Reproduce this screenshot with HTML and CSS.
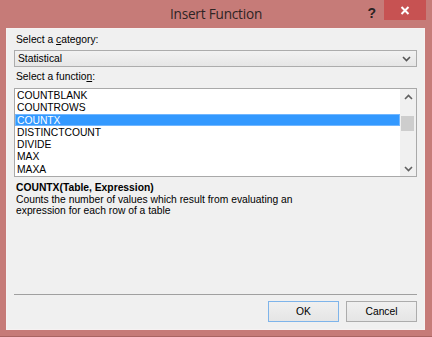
FILE: index.html
```html
<!DOCTYPE html>
<html>
<head>
<meta charset="utf-8">
<link rel="stylesheet" href="styles.css">
</head>
<body>
<div class="window">
  <div class="titlebar">
    <div class="tb-left"></div>
    <div class="title">Insert Function</div>
    <div class="tb-right">
      <span class="help">?</span>
      <span class="close"><svg width="10" height="9" viewBox="0 0 10 9"><path d="M1.5 1 L8.5 8 M8.5 1 L1.5 8" stroke="#fff" stroke-width="2" fill="none"/></svg></span>
    </div>
  </div>
  <div class="client">
    <div class="label">Select a <u>c</u>ategory:</div>
    <div class="combo">
      <span>Statistical</span>
      <svg class="chev" width="9" height="6" viewBox="0 0 9 6"><path d="M1 1 L4.5 4.5 L8 1" stroke="#555" stroke-width="1.6" fill="none"/></svg>
    </div>
    <div class="label label2">Select a functio<u>n</u>:</div>
    <div class="list">
      <div class="items">
        <div class="item">COUNTBLANK</div>
        <div class="item">COUNTROWS</div>
        <div class="item sel">COUNTX</div>
        <div class="item">DISTINCTCOUNT</div>
        <div class="item">DIVIDE</div>
        <div class="item">MAX</div>
        <div class="item">MAXA</div>
      </div>
      <div class="scroll">
        <svg class="arrow" width="9" height="6" viewBox="0 0 9 6"><path d="M1 5 L4.5 1.5 L8 5" stroke="#606060" stroke-width="1.6" fill="none"/></svg>
        <div class="track"><div class="thumb"></div></div>
        <svg class="arrow" width="9" height="6" viewBox="0 0 9 6"><path d="M1 1 L4.5 4.5 L8 1" stroke="#606060" stroke-width="1.6" fill="none"/></svg>
      </div>
    </div>
    <div class="desc">
      <div class="sig">COUNTX(Table, Expression)</div>
      <div class="text">Counts the number of values which result from evaluating an expression for each row of a table</div>
    </div>
    <div class="sep"></div>
    <div class="buttons">
      <div class="btn ok">OK</div>
      <div class="btn">Cancel</div>
    </div>
  </div>
</div>
</body>
</html>
```
FILE: styles.css
```css
html, body {
  margin: 0;
  padding: 0;
}
body {
  width: 432px;
  height: 337px;
  overflow: hidden;
  font-family: "Liberation Sans", Arial, sans-serif;
}
.window {
  width: 432px;
  height: 337px;
  box-sizing: border-box;
  background: #c67b78;
  border-bottom: 1px solid #a96462;
  display: flex;
  flex-direction: column;
}
.titlebar {
  height: 28px;
  display: grid;
  grid-template-columns: 1fr auto 1fr;
  align-items: start;
}
.title {
  font-family: "Open Sans", "Noto Sans", sans-serif;
  font-size: 13.6px;
  color: #2e2424;
  line-height: 28px;
  letter-spacing: -0.2px;
}
.tb-right {
  display: flex;
  justify-content: flex-end;
  align-items: flex-start;
  padding-right: 6px;
}
.help {
  font-family: "Liberation Sans", Arial, sans-serif;
  font-weight: bold;
  font-size: 14px;
  color: #2a2222;
  line-height: 20px;
  margin-right: 8px;
  margin-top: 3px;
}
.close {
  width: 42px;
  height: 20px;
  background: #c75252;
  display: flex;
  align-items: center;
  justify-content: center;
}
.client {
  flex: 1;
  margin: 0 7px 6px 6px;
  background: #f0f0f0;
  border: 1px solid #f6f2f2;
  display: flex;
  flex-direction: column;
  padding: 4px 7px 7px 7px;
  font-size: 10.3px;
  color: #000;
}
.label {
  line-height: 13px;
  padding-left: 2px;
  height: 13px;
}
.label u {
  text-decoration: underline;
  text-underline-offset: 1px;
}
.combo {
  margin-top: 4px;
  height: 17px;
  box-sizing: border-box;
  border: 1px solid #acacac;
  background: linear-gradient(#f2f2f2, #e6e6e6);
  display: flex;
  align-items: center;
  justify-content: space-between;
  padding: 0 5px 0 3px;
  line-height: 15px;
}
.label2 {
  margin-top: 3px;
}
.list {
  margin-top: 5px;
  height: 89px;
  box-sizing: border-box;
  border: 1px solid #a9a9a9;
  background: #fff;
  display: flex;
}
.items {
  flex: 1;
  overflow: hidden;
}
.item {
  height: 12.3px;
  line-height: 13px;
  padding-left: 2px;
  white-space: nowrap;
}
.item.sel {
  background: #3399ff;
  color: #fff;
  box-shadow: inset 0 0 0 1px #72b7ff;
}
.scroll {
  width: 16px;
  background: #f0f0f0;
  display: flex;
  flex-direction: column;
  align-items: center;
  padding: 5px 0 4px 0;
  box-sizing: border-box;
}
.arrow {
  flex: none;
}
.track {
  flex: 1;
  width: 100%;
  padding-top: 16px;
  box-sizing: border-box;
}
.thumb {
  width: 13px;
  height: 15px;
  margin: 0 auto 0 1px;
  background: #cdcdcd;
}
.desc {
  flex: 1;
  margin-top: 5px;
  padding-left: 2px;
}
.sig {
  font-weight: bold;
  line-height: 12px;
}
.text {
  line-height: 11px;
  width: 290px;
}
.sep {
  height: 1px;
  background: #a0a0a0;
  margin-bottom: 6px;
}
.buttons {
  display: flex;
  justify-content: flex-end;
  gap: 7px;
}
.btn {
  width: 71px;
  height: 21px;
  box-sizing: border-box;
  border: 1px solid #acacac;
  background: linear-gradient(#f0f0f0, #e5e5e5);
  text-align: center;
  line-height: 19px;
  font-size: 10.3px;
}
.btn.ok {
  border-color: #7eb4ea;
}
```
